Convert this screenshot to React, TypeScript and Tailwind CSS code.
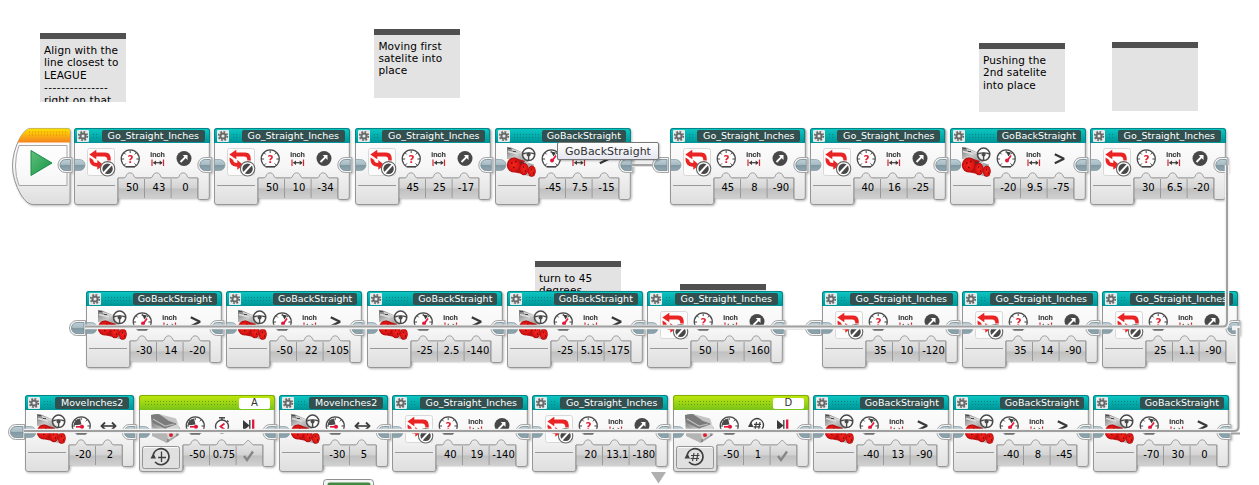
import React from "react";

type Kind = "go" | "back" | "move" | "time" | "turns";
type BlockData = { x: number; y: number; kind: Kind; label: string; values: string[] };

const GO = "Go_Straight_Inches";
const BACK = "GoBackStraight";
const MOVE = "MoveInches2";

const blocks: BlockData[] = [
  { x: 74, y: 128, kind: "go", label: GO, values: ["50", "43", "0"] },
  { x: 214, y: 128, kind: "go", label: GO, values: ["50", "10", "-34"] },
  { x: 354.5, y: 128, kind: "go", label: GO, values: ["45", "25", "-17"] },
  { x: 495, y: 128, kind: "back", label: BACK, values: ["-45", "7.5", "-15"] },
  { x: 669.5, y: 128, kind: "go", label: GO, values: ["45", "8", "-90"] },
  { x: 809.5, y: 128, kind: "go", label: GO, values: ["40", "16", "-25"] },
  { x: 950, y: 128, kind: "back", label: BACK, values: ["-20", "9.5", "-75"] },
  { x: 1090, y: 128, kind: "go", label: GO, values: ["30", "6.5", "-20"] },
  { x: 86, y: 291, kind: "back", label: BACK, values: ["-30", "14", "-20"] },
  { x: 226.4, y: 291, kind: "back", label: BACK, values: ["-50", "22", "-105"] },
  { x: 366.5, y: 291, kind: "back", label: BACK, values: ["-25", "2.5", "-140"] },
  { x: 507, y: 291, kind: "back", label: BACK, values: ["-25", "5.15", "-175"] },
  { x: 647, y: 291, kind: "go", label: GO, values: ["50", "5", "-160"] },
  { x: 822, y: 291, kind: "go", label: GO, values: ["35", "10", "-120"] },
  { x: 962, y: 291, kind: "go", label: GO, values: ["35", "14", "-90"] },
  { x: 1102, y: 291, kind: "go", label: GO, values: ["25", "1.1", "-90"] },
  { x: 25, y: 395, kind: "move", label: MOVE, values: ["-20", "2"] },
  { x: 139, y: 395, kind: "time", label: "A", values: ["-50", "0.75", ""] },
  { x: 279, y: 395, kind: "move", label: MOVE, values: ["-30", "5"] },
  { x: 392, y: 395, kind: "go", label: GO, values: ["40", "19", "-140"] },
  { x: 532.4, y: 395, kind: "go", label: GO, values: ["20", "13.1", "-180"] },
  { x: 673, y: 395, kind: "turns", label: "D", values: ["-50", "1", ""] },
  { x: 813, y: 395, kind: "back", label: BACK, values: ["-40", "13", "-90"] },
  { x: 953, y: 395, kind: "back", label: BACK, values: ["-40", "8", "-45"] },
  { x: 1093, y: 395, kind: "back", label: BACK, values: ["-70", "30", "0"] },
];

const notes = [
  { x: 40, y: 33, lines: ["Align with the", "line closest to", "LEAGUE", "---------------", "right on that"] },
  { x: 374.4, y: 28.5, lines: ["Moving first", "satelite into", "place"] },
  { x: 979, y: 43, lines: ["Pushing the", "2nd satelite", "into place"] },
  { x: 1112, y: 41.5, lines: [] },
  { x: 535, y: 261, lines: ["turn to 45", "degrees"] },
  { x: 680, y: 284, lines: [] },
];

function Defs() {
  return (
    <svg className="absolute h-0 w-0">
      <defs>
        <linearGradient id="body" x1="0" y1="0" x2="0" y2="1">
          <stop offset="0" stopColor="#ffffff" />
          <stop offset="0.5" stopColor="#f6f6f6" />
          <stop offset="1" stopColor="#dedede" />
        </linearGradient>
        <linearGradient id="slot" x1="0" y1="0" x2="0" y2="1">
          <stop offset="0" stopColor="#ececec" />
          <stop offset="0.6" stopColor="#d3d3d3" />
          <stop offset="0.64" stopColor="#c0c0c0" />
          <stop offset="1" stopColor="#cfcfcf" />
        </linearGradient>
        <linearGradient id="plug" x1="0" y1="0" x2="0" y2="1">
          <stop offset="0" stopColor="#bdced5" />
          <stop offset="0.45" stopColor="#a9bcc4" />
          <stop offset="0.55" stopColor="#7f98a2" />
          <stop offset="1" stopColor="#93a8b0" />
        </linearGradient>
        <linearGradient id="orange" x1="0" y1="0" x2="0" y2="1">
          <stop offset="0" stopColor="#ffe000" />
          <stop offset="1" stopColor="#f58220" />
        </linearGradient>
        <linearGradient id="play" x1="0" y1="0" x2="1" y2="1">
          <stop offset="0" stopColor="#5fc07a" />
          <stop offset="1" stopColor="#159447" />
        </linearGradient>
        <linearGradient id="metal" x1="0" y1="0" x2="1" y2="1">
          <stop offset="0" stopColor="#6d6d6d" />
          <stop offset="0.5" stopColor="#c9c9c9" />
          <stop offset="1" stopColor="#8b8b8b" />
        </linearGradient>
        <radialGradient id="red">
          <stop offset="0" stopColor="#f2271d" />
          <stop offset="0.75" stopColor="#dd1414" />
          <stop offset="1" stopColor="#a80d0d" />
        </radialGradient>
      </defs>
    </svg>
  );
}

function PlugOut({ x, y, w = 14 }: { x: number; y: number; w?: number }) {
  return (
    <g transform={`translate(${x} ${y})`}>
      <path d={`M${w} -7.500 H7 A7 7.500 0 0 0 7 7.500 H${w} Z`} fill="#f4f4f4" stroke="#a5a5a5" strokeWidth="1" />
      <path d={`M${w - 1.5} -5.500 H7.500 A5.500 5.500 0 0 0 7.500 5.500 H${w - 1.5} Z`} fill="url(#plug)" stroke="#748a94" strokeWidth="0.8" />
    </g>
  );
}

function PlugIn() {
  return <path d="M0.500 31.500 H5.500 A5.500 5.500 0 0 1 5.500 42.500 H0.500 Z" fill="url(#plug)" stroke="#8499a2" strokeWidth="0.7" />;
}

function Motor() {
  return (
    <g>
      <path d="M12 19 L16 19.500 L32 26 L33 34 L22 32 L12 31 Z" fill="url(#metal)" />
      <path d="M13 23.500 L23 26 M17 21.500 L27 25.500" stroke="#dedede" strokeWidth="1.3" />
      <path d="M13 20.500 h3 M18 23.500 h3" stroke="#4a4a4a" strokeWidth="1.1" />
      <path d="M19 29.500 L30 33 L30 46.500 L20 44.500 Z" fill="#c21414" />
      <path d="M25 33 L29 34.500 L29.500 46 L26 46 Z" fill="#5e2a2a" />
      <path d="M29 33.500 L39 36.500 L37 49 L28 46.500 Z" fill="#a9a9a9" />
      <path d="M32 34.500 L31 47" stroke="#dddddd" strokeWidth="1.3" />
      <ellipse cx="18.800" cy="37" rx="7" ry="7.600" fill="url(#red)" />
      <ellipse cx="29" cy="41" rx="4.500" ry="6.300" fill="url(#red)" />
      <ellipse cx="36.800" cy="43.200" rx="4" ry="5.600" fill="url(#red)" />
      <path d="M16 35 h1.500 M20 33.500 h1.500 M18 39.500 h1.500 M28 39 h1 M30 43 h1 M36 41.500 h1 M38 45 h1" stroke="#7c0505" strokeWidth="1.300" />
      <circle cx="33.600" cy="26.300" r="6.200" fill="#ffffff" fillOpacity="0.8" stroke="#4a4a4a" strokeWidth="1.500" />
      <path d="M27.500 26 Q33.600 23.800 39.700 26 M33.600 26.300 V32.200" fill="none" stroke="#4a4a4a" strokeWidth="1.400" />
      <circle cx="33.600" cy="26.600" r="2" fill="#4a4a4a" />
    </g>
  );
}

function SmallMotor() {
  return (
    <g>
      <path d="M12 20 L18 19 L37 28 L41 33 L40 40 L28 48 L13 39 Z" fill="url(#metal)" />
      <path d="M12 20 L20 19 L38 29 L27 34 L14 28 Z" fill="#7b7b7b" />
      <path d="M20 19 L37 23.500 L39 29 L30 26 Z" fill="#c4c4c4" />
      <path d="M27 33 L39 29 L41 38 L29 45 Z" fill="#d4d4d4" />
      <path d="M13 32 L27 38 L28 48 L13 41 Z" fill="#b4b4b4" />
      <path d="M14 24 L26 31 L35 29" fill="none" stroke="#bdbdbd" strokeWidth="1.2" />
      <circle cx="32" cy="40" r="2" fill="#d81f2a" />
      <circle cx="36.500" cy="36.500" r="1" fill="#d81f2a" />
      <path d="M29 44 v3 M38 38 v3" stroke="#777" strokeWidth="1.2" />
    </g>
  );
}

function Loop() {
  return (
    <g>
      <rect x="13.500" y="20.500" width="27" height="27" rx="2" fill="#fcfcfc" stroke="#d8d8d8" />
      <path d="M15.300 26.500 L22.300 21.800 V24.600 H31 C35.500 24.600 37 27.500 36.800 32.500 H33.300 C33.300 29.500 32.500 28.500 30 28.500 H22.300 V31.200 Z" fill="#ea2424" />
      <path d="M15.600 29.500 L19.200 32 C19.200 34 20.500 34.900 23.300 34.900 V32 L29.300 37 L23.300 41.800 V38.800 C17.500 38.800 15 35 15.600 29.500 Z" fill="#ea2424" />
      <circle cx="33.600" cy="40.800" r="7.200" fill="#ffffff" stroke="#666666" strokeWidth="1.100" />
      <circle cx="33.600" cy="40.800" r="5.200" fill="#474747" />
      <path d="M29.300 45.500 L37.900 36.100" stroke="#ffffff" strokeWidth="1.900" />
    </g>
  );
}

function Gauge({ mode }: { mode: "question" | "up" | "left" }) {
  return (
    <g>
      <path d="M51.500 38.500 A9 9 0 1 1 61 38.500" fill="#ffffff" stroke="#4b4b4b" strokeWidth="1.300" />
      <path d="M51.500 38.800 H61" stroke="#444444" strokeWidth="1.600" />
      <path
        d="M56.200 22.500 v2.600 M47.500 31 h2.600 M62.400 31 h2.600 M50.200 24.900 l1.500 1.500 M62.300 24.900 l-1.500 1.500 M50.500 36.900 l1.500 -1.500 M62 36.900 l-1.500 -1.500"
        stroke="#444444"
        strokeWidth="1"
      />
      {mode === "question" && (
        <text x="56.500" y="35.300" textAnchor="middle" fontSize="10.500" fontWeight="700" fontFamily="DejaVu Sans, sans-serif" fill="#ea2433">
          ?
        </text>
      )}
      {mode === "up" && (
        <g>
          <path d="M56 23.500 L61 24.500 L58.500 28.500 Z" fill="#3c3c3c" />
          <path d="M57 33 L61 27.500" stroke="#e3173a" strokeWidth="1.700" />
          <circle cx="57" cy="32.600" r="2" fill="#e3173a" />
        </g>
      )}
      {mode === "left" && (
        <g>
          <path d="M48.500 30.500 A8 8 0 0 1 55 23.500 L56.500 29.500 Z" fill="#4a4a4a" />
          <path d="M50 31.800 H57" stroke="#ffffff" strokeWidth="3" />
          <path d="M51 31.800 H57" stroke="#e3173a" strokeWidth="1.700" />
          <circle cx="57" cy="31.800" r="2.100" fill="#e3173a" />
        </g>
      )}
    </g>
  );
}

function Inch() {
  return (
    <g>
      <text x="83.500" y="28.600" textAnchor="middle" fontSize="7.500" fontWeight="700" fontFamily="Liberation Sans, sans-serif" fill="#3f3f3f" stroke="#3f3f3f" strokeWidth="0.200" textLength="14.500" lengthAdjust="spacingAndGlyphs">
        inch
      </text>
      <path d="M78 31.500 V38 M89.500 31.500 V38" stroke="#d8232f" strokeWidth="1.200" />
      <path d="M79.500 34.700 H88" stroke="#3c3c3c" strokeWidth="1.200" />
      <path d="M79 34.700 l3 -2.200 v4.400 Z M88.700 34.700 l-3 -2.200 v4.400 Z" fill="#3c3c3c" />
    </g>
  );
}

function ArrowDisc() {
  return (
    <g>
      <circle cx="110" cy="30.500" r="7.500" fill="#484848" />
      <path d="M106.500 34 L111.500 29" stroke="#ffffff" strokeWidth="1.800" />
      <path d="M108.700 27 H113.500 V31.900 Z" fill="#ffffff" />
    </g>
  );
}

function CycleIcon({ x, y, hash, r }: { x: number; y: number; hash: boolean; r: number }) {
  return (
    <g transform={`translate(${x} ${y})`} fill="none" stroke="#3f3f3f" strokeWidth={r > 7 ? 1.6 : 1.3}>
      <path d={`M${-r + 0.3} -2.500 A${r} ${r} 0 1 1 ${-r + 2} ${r / 2 + 1}`} />
      <path d={`M${-r - 2.5} 1.500 L${-r + 0.3} -4 L${-r + 3} 1.500 Z`} fill="#3f3f3f" stroke="none" />
      {hash ? (
        <path d={r > 7 ? "M-1 -4 L-2.500 4 M3 -4 L1.500 4 M-4 -1.500 H4.500 M-4.500 1.500 H4" : "M-.5 -3.500 L-1.800 3.500 M3 -3.500 L1.700 3.500 M-3 -1.200 H4 M-3.500 1.400 H3.500"} strokeWidth="1.200" />
      ) : (
        <path d="M0.500 -5.500 V5 M-3 0.500 H5" strokeWidth="1.300" />
      )}
    </g>
  );
}

function Icons({ kind }: { kind: Kind }) {
  if (kind === "go")
    return (
      <g>
        <Loop />
        <Gauge mode="question" />
        <Inch />
        <ArrowDisc />
      </g>
    );
  if (kind === "back")
    return (
      <g>
        <Motor />
        <Gauge mode="up" />
        <Inch />
        <path d="M104.800 26.300 L114 30.800 L104.800 35.300" fill="none" stroke="#383838" strokeWidth="2.300" strokeMiterlimit="2" />
      </g>
    );
  if (kind === "move")
    return (
      <g>
        <Motor />
        <Gauge mode="left" />
        <path d="M77 31 H89" stroke="#3c3c3c" strokeWidth="1.600" />
        <path d="M80 27.500 L76.500 31 L80 34.500 M87 27.500 L90.500 31 L87 34.500" fill="none" stroke="#3c3c3c" strokeWidth="1.800" />
      </g>
    );
  return (
    <g>
      <SmallMotor />
      <Gauge mode="left" />
      {kind === "time" ? (
        <g>
          <circle cx="83" cy="31.500" r="6.500" fill="#ffffff" stroke="#4b4b4b" strokeWidth="1.400" />
          <path d="M80 22.800 H86 M83 22.800 V25 M88 25.500 l1.500 1.500" stroke="#4b4b4b" strokeWidth="1.500" />
          <path d="M85.500 28.500 L81.500 31.500 L85.500 34.500" fill="none" stroke="#e3173a" strokeWidth="1.800" />
        </g>
      ) : (
        <CycleIcon x={84} y={30.5} hash r={6.5} />
      )}
      <path d="M104 25 V36 L110.500 30.500 Z" fill="#383838" />
      <path d="M110.800 25 V36" stroke="#383838" strokeWidth="1.300" />
      <path d="M114.200 24.500 V36.500" stroke="#e3173a" strokeWidth="2.300" />
      <rect x="3.500" y="51.500" width="37" height="22" rx="2" fill="#e0e0e0" stroke="#969696" />
      <path d="M5 52.500 H39" stroke="#fafafa" />
      <CycleIcon x={22} y={62} hash={kind === "turns"} r={8} />
    </g>
  );
}

function Block({ b }: { b: BlockData }) {
  const n = b.values.length;
  const w = 56 + n * 26.6;
  const edge = 44 + n * 26.6;
  const green = b.kind === "time" || b.kind === "turns";
  let top = "M44 50";
  for (let i = 0; i < n; i++) {
    const c = 56 + i * 26.6;
    top +=
      green && i === 2
        ? ` H${c - 5} L${c} 45 L${c + 5} 50`
        : ` H${c - 6} Q${c - 4} 49.500 ${c - 3.5} 47 Q${c - 2.5} 44.800 ${c} 44.800 Q${c + 2.5} 44.800 ${c + 3.5} 47 Q${c + 4} 49.500 ${c + 6} 50`;
  }
  top += ` H${edge}`;
  return (
    <div className="absolute" style={{ left: b.x, top: b.y, width: w, height: 79 }}>
      <div className="relative flex h-full w-full flex-col">
        <svg className="absolute top-0 left-0 overflow-visible drop-shadow-[1px_1px_1px_rgba(0,0,0,0.28)]" width={w} height="79">
          <path
            d={`M0.500 3 Q0.500 0.500 3 0.500 H${w - 3} Q${w - 0.5} 0.500 ${w - 0.5} 3 V69 Q${w - 0.5} 71.500 ${w - 3} 71.500 H${edge + 2} Q${edge} 71.500 ${edge} 69.500 V50 H44 V74 Q44 76.500 41.500 76.500 H3 Q0.500 76.500 0.500 74 Z`}
            fill="url(#body)"
            stroke="#969696"
          />
          <path d={`${top} V70 H44 Z`} fill="url(#slot)" />
          <path d={top} fill="none" stroke="#a0a0a0" />
          {b.values.slice(1).map((_, i) => (
            <path key={i} d={`M${70.5 + i * 26.6} 51 V70`} stroke="#9a9a9a" />
          ))}
          <path d={`M44 50 V74 M${edge} 50 V70`} stroke="#929292" />
          {!green && <path d="M3 57.500 H41" stroke="#999999" />}
          <Icons kind={b.kind} />
          {green && <path d="M105 61 L108 65 L114 56.500" fill="none" stroke="#858585" strokeWidth="2.300" />}
          <PlugIn />
          <PlugOut x={edge} y={37} />
        </svg>
        <div
          className={
            green
              ? "relative flex h-[15px] items-center justify-between rounded-t-[3px] border border-b-0 border-[#7fae00] bg-linear-to-b from-[#bfe60a] to-[#78c31a] pr-1 pl-[3px]"
              : "relative flex h-[15px] items-center justify-between rounded-t-[3px] border border-b-0 border-[#008687] bg-linear-to-b from-[#0cc6c2] to-[#009496] pr-1 pl-[2px]"
          }
        >
          {!green && (
            <span className="flex h-3 w-3 shrink-0 items-center justify-center rounded-[1px] bg-[#e4eaea]">
              <svg width="12" height="12" viewBox="0 0 12 12">
                <circle cx="6" cy="6" r="4.300" fill="none" stroke="#686868" strokeWidth="1.700" strokeDasharray="1.800 1.577" />
                <circle cx="6" cy="6" r="2.600" fill="none" stroke="#686868" strokeWidth="2" />
              </svg>
            </span>
          )}
          <span
            className={
              green
                ? "mr-[2px] ml-[1px] h-[6px] grow bg-[radial-gradient(#5fa000_0.6px,transparent_0.9px)] bg-size-[3px_3px]"
                : "mx-[3px] h-[7px] grow bg-[radial-gradient(#087f80_0.5px,transparent_0.9px)] bg-size-[3px_3px]"
            }
          />
          {green ? (
            <span className="flex h-[11px] w-[31px] items-center justify-center rounded-[2px] bg-white text-[10px] leading-none text-[#333]">{b.label}</span>
          ) : (
            <span
              className={
                b.kind === "go"
                  ? "flex h-3 w-[103px] items-center justify-center rounded-[2px] bg-[#31504f] text-[9.5px] leading-none whitespace-nowrap text-white"
                  : b.kind === "back"
                    ? "flex h-3 w-[84px] items-center justify-center rounded-[2px] bg-[#31504f] text-[9.5px] leading-none whitespace-nowrap text-white"
                    : "flex h-3 w-[74px] items-center justify-center rounded-[2px] bg-[#31504f] text-[9.5px] leading-none whitespace-nowrap text-white"
              }
            >
              {b.label}
            </span>
          )}
        </div>
        <div className="relative mt-[35px] ml-[45px] flex h-5 items-center text-[10px] leading-none text-black">
          {b.values.map((v, i) => (
            <span key={i} className="w-[26.6px] shrink-0 text-center whitespace-nowrap">
              {v}
            </span>
          ))}
        </div>
      </div>
    </div>
  );
}

function Note({ x, y, lines }: { x: number; y: number; lines: string[] }) {
  return (
    <div className="absolute h-[69px] w-[86px] overflow-hidden border-t-[6px] border-[#505050] bg-[#e3e3e3] pt-[5px] pl-1 text-[10.5px] leading-[12.4px] tracking-[0.12px] whitespace-nowrap text-black" style={{ left: x, top: y }}>
      {lines.map((l) => (
        <p key={l} className={l.startsWith("-") ? "tracking-[0.5px]" : undefined}>
          {l}
        </p>
      ))}
    </div>
  );
}

function StartBlock() {
  return (
    <svg className="absolute top-[128px] left-[12px] overflow-visible drop-shadow-[1px_1px_1px_rgba(0,0,0,0.28)]" width="60" height="78">
      <path d="M18 0.500 H56 Q58 0.500 58 3 V74 Q58 76.500 55 76.500 H21 Q15 76.500 9 67 Q0.500 52 0.500 38 Q0.500 24 8 10 Q13 1 18 0.500 Z" fill="url(#body)" stroke="#969696" />
      <path d="M18 0.500 H56 Q58 0.500 58 3 V14.500 H5.500 Q12 1 18 0.500 Z" fill="url(#orange)" />
      <path d="M17 4 H55 M17 7 H55" stroke="#d99200" strokeWidth="1" strokeDasharray="1 2" />
      <path d="M7 17.500 H55 V57.500 H7 Q3.500 49 3.500 38 Q3.500 26 7 17.500 Z" fill="#ffffff" fillOpacity="0.5" stroke="#a6a6a6" />
      <path d="M19 22.500 V47.500 L40 35 Z" fill="url(#play)" stroke="#1c8d49" />
      <PlugOut x={46} y={37} />
    </svg>
  );
}

function Wires() {
  return (
    <svg className="absolute top-0 left-0" width="1259" height="485">
      <path d="M632 165 H654 M784 328 H806" stroke="#a4a4a4" strokeWidth="2" />
      <path d="M632 163 H654 M632 166.500 H654 M784 329.500 H806" stroke="#e2e2e2" strokeWidth="1" />
      <PlugOut x={652.5} y={165} w={16} />
      <PlugOut x={69.5} y={328} w={16} />
      <PlugOut x={805.5} y={328} w={16} />
      <PlugOut x={8.5} y={432} w={16} />
      <g fill="none">
        <path d="M1227 165 V323 Q1227 327 1223 327 H85 M1232 328 H1238 V427 Q1238 431 1234 431 H24" stroke="#f2f2f2" strokeWidth="4.500" />
        <path d="M1227 165 V322 Q1227 326.500 1223 326.500 H85 M1238.500 328 V427 Q1238.500 431 1234 431 H24 M1231 433.500 H1240" stroke="#a0a0a0" strokeWidth="2" />
      </g>
    </svg>
  );
}

export default function App() {
  return (
    <main className="relative h-[485px] w-[1259px] overflow-hidden bg-white font-['DejaVu_Sans',sans-serif]">
      <Defs />
      {notes.map((n, i) => (
        <Note key={i} x={n.x} y={n.y} lines={n.lines} />
      ))}
      <StartBlock />
      {blocks.map((b) => (
        <Block key={`${b.x}-${b.y}`} b={b} />
      ))}
      <Wires />
      <div className="absolute top-[142px] left-[557px] flex h-[18px] w-[102px] items-center justify-center rounded-[2px] border border-[#777777] bg-linear-to-b from-white to-[#e5e6f0] text-[11px] leading-none text-[#333] shadow-[1px_1px_2px_rgba(0,0,0,0.25)]">
        GoBackStraight
      </div>
      <svg className="absolute top-[470px] left-[320px]" width="350" height="15">
        <rect x="3.500" y="9.500" width="50" height="20" rx="3" fill="#f4f4f4" stroke="#8f8f8f" />
        <rect x="7.500" y="12.500" width="43" height="10" rx="2" fill="#3f8a3f" />
        <path d="M331 2 H346 L338.500 13.500 Z" fill="#b0b0b0" />
      </svg>
    </main>
  );
}
